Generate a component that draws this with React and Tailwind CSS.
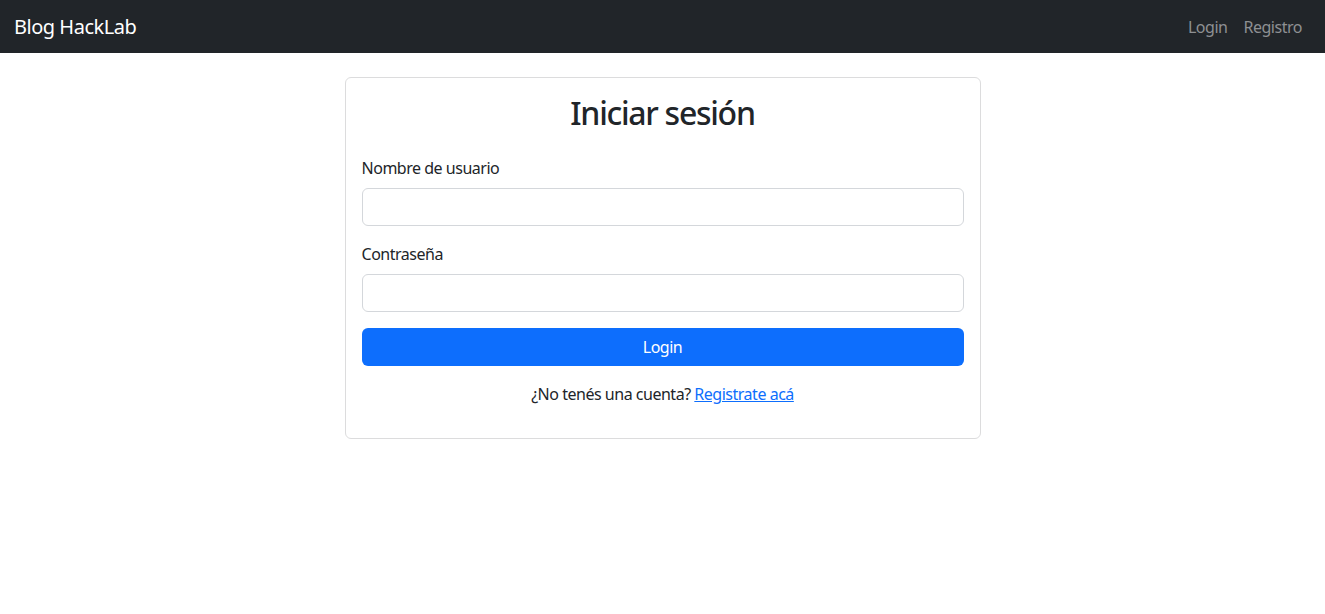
export default function App() {
  return (
    <div className="min-h-screen bg-white text-[#212529] font-['Segoe_UI','Noto_Sans',sans-serif] text-base tracking-[-0.03em]">
      {/* Navbar */}
      <nav className="h-[53px] bg-[#212529] flex items-center justify-between px-3">
        <a href="#" className="text-white text-xl ml-[2px]">Blog HackLab</a>
        <div className="flex items-center mr-[3px]">
          <a href="#" className="px-2 text-[#8e9093]">Login</a>
          <a href="#" className="px-2 text-[#8e9093]">Registro</a>
        </div>
      </nav>

      {/* Login card */}
      <div className="w-[636px] mx-auto mt-6 border border-[#dcdcdd] rounded-md">
        <div className="p-4">
          <h2 className="text-[32px] leading-[1.2] font-medium tracking-[-0.04em] text-center mb-6">Iniciar sesión</h2>
          <form>
            <div className="mb-4">
              <label htmlFor="username" className="block mb-2 leading-6">Nombre de usuario</label>
              <input
                id="username"
                type="text"
                className="block w-full h-[38px] px-3 border border-[#d4d7db] rounded-md outline-none"
              />
            </div>
            <div className="mb-4">
              <label htmlFor="password" className="block mb-2 leading-6">Contraseña</label>
              <input
                id="password"
                type="password"
                className="block w-full h-[38px] px-3 border border-[#d4d7db] rounded-md outline-none"
              />
            </div>
            <button
              type="submit"
              className="w-full h-[38px] bg-[#0d6efd] text-white rounded-md"
            >
              Login
            </button>
          </form>
          <p className="mt-4 mb-4 text-center leading-6">
            ¿No tenés una cuenta? <a href="#" className="text-[#0d6efd] underline">Registrate acá</a>
          </p>
        </div>
      </div>
    </div>
  )
}
